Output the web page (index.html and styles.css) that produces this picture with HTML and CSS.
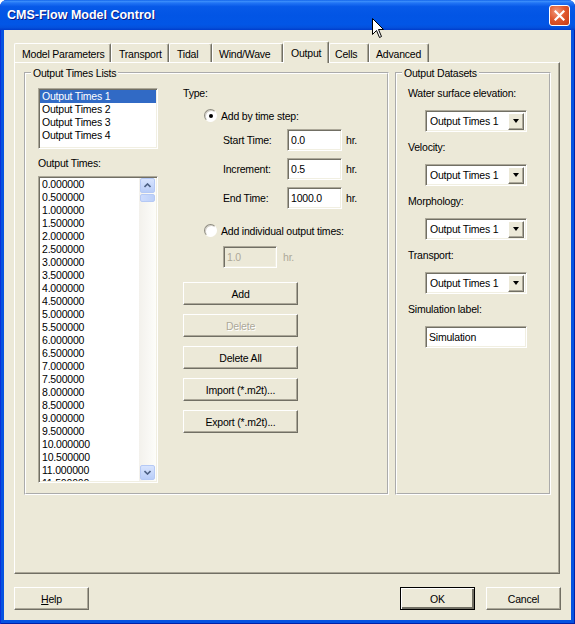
FILE: index.html
```html
<!DOCTYPE html>
<html lang="en">
<head>
    <meta charset="UTF-8">
    <title>CMS-Flow Model Control</title>
    <link rel="stylesheet" href="styles.css">
</head>
<body>
    <div class="window">
        <div class="titlebar">
            <span class="title">CMS-Flow Model Control</span>
            <span class="close-btn">
                <svg width="11" height="11" viewBox="0 0 11 11"><path d="M1.5 1.5 L9.5 9.5 M9.5 1.5 L1.5 9.5" stroke="#fff" stroke-width="2.2" stroke-linecap="square"/></svg>
            </span>
        </div>

        <div class="client">
            <div class="tabs">
                <div class="tab tab-params">Model Parameters</div>
                <div class="tab tab-transport">Transport</div>
                <div class="tab tab-tidal">Tidal</div>
                <div class="tab tab-wind">Wind/Wave</div>
                <div class="tab tab-output active">Output</div>
                <div class="tab tab-cells">Cells</div>
                <div class="tab tab-advanced">Advanced</div>
            </div>

            <div class="panel">
                <fieldset class="group times-group">
                    <legend>Output Times Lists</legend>
                    <div class="group-body">
                        <div class="lists-col">
                            <div class="listbox lists">
                                <div class="item selected">Output Times 1</div>
                                <div class="item">Output Times 2</div>
                                <div class="item">Output Times 3</div>
                                <div class="item">Output Times 4</div>
                            </div>
                            <div class="label times-label">Output Times:</div>
                            <div class="listbox times">
                                <div class="items">
                                    <div class="item">0.000000</div>
                                    <div class="item">0.500000</div>
                                    <div class="item">1.000000</div>
                                    <div class="item">1.500000</div>
                                    <div class="item">2.000000</div>
                                    <div class="item">2.500000</div>
                                    <div class="item">3.000000</div>
                                    <div class="item">3.500000</div>
                                    <div class="item">4.000000</div>
                                    <div class="item">4.500000</div>
                                    <div class="item">5.000000</div>
                                    <div class="item">5.500000</div>
                                    <div class="item">6.000000</div>
                                    <div class="item">6.500000</div>
                                    <div class="item">7.000000</div>
                                    <div class="item">7.500000</div>
                                    <div class="item">8.000000</div>
                                    <div class="item">8.500000</div>
                                    <div class="item">9.000000</div>
                                    <div class="item">9.500000</div>
                                    <div class="item">10.000000</div>
                                    <div class="item">10.500000</div>
                                    <div class="item">11.000000</div>
                                    <div class="item">11.500000</div>
                                </div>
                                <div class="vscroll">
                                    <div class="sb-btn">
                                        <svg width="7" height="5" viewBox="0 0 7 5"><path d="M0.5 4 L3.5 1 L6.5 4" fill="none" stroke="#4D6185" stroke-width="1.6"/></svg>
                                    </div>
                                    <div class="sb-thumb"></div>
                                    <div class="sb-space"></div>
                                    <div class="sb-btn">
                                        <svg width="7" height="5" viewBox="0 0 7 5"><path d="M0.5 1 L3.5 4 L6.5 1" fill="none" stroke="#4D6185" stroke-width="1.6"/></svg>
                                    </div>
                                </div>
                            </div>
                        </div>

                        <div class="type-col">
                            <div class="label">Type:</div>
                            <div class="radio-row">
                                <span class="radio checked"></span>
                                <span>Add by time step:</span>
                            </div>
                            <div class="field-row">
                                <span class="field-label">Start Time:</span>
                                <span class="textbox">0.0</span>
                                <span class="unit">hr.</span>
                            </div>
                            <div class="field-row">
                                <span class="field-label">Increment:</span>
                                <span class="textbox">0.5</span>
                                <span class="unit">hr.</span>
                            </div>
                            <div class="field-row">
                                <span class="field-label">End Time:</span>
                                <span class="textbox">1000.0</span>
                                <span class="unit">hr.</span>
                            </div>
                            <div class="radio-row second">
                                <span class="radio"></span>
                                <span>Add individual output times:</span>
                            </div>
                            <div class="field-row disabled">
                                <span class="textbox">1.0</span>
                                <span class="unit">hr.</span>
                            </div>
                            <div class="button-list">
                                <button class="btn wide">Add</button>
                                <button class="btn wide" disabled>Delete</button>
                                <button class="btn wide">Delete All</button>
                                <button class="btn wide">Import (*.m2t)...</button>
                                <button class="btn wide">Export (*.m2t)...</button>
                            </div>
                        </div>
                    </div>
                </fieldset>

                <fieldset class="group datasets-group">
                    <legend>Output Datasets</legend>
                    <div class="ds-body">
                        <div class="label">Water surface elevation:</div>
                        <div class="combo"><span>Output Times 1</span><span class="drop"></span></div>
                        <div class="label ds-label">Velocity:</div>
                        <div class="combo"><span>Output Times 1</span><span class="drop"></span></div>
                        <div class="label ds-label">Morphology:</div>
                        <div class="combo"><span>Output Times 1</span><span class="drop"></span></div>
                        <div class="label ds-label">Transport:</div>
                        <div class="combo"><span>Output Times 1</span><span class="drop"></span></div>
                        <div class="label ds-label">Simulation label:</div>
                        <div class="textbox sim">Simulation</div>
                    </div>
                </fieldset>
            </div>

            <div class="footer">
                <button class="btn"><u>H</u>elp</button>
                <button class="btn default">OK</button>
                <button class="btn">Cancel</button>
            </div>
        </div>

        <svg class="cursor" width="13" height="21" viewBox="0 0 13 21"><path d="M0.5 0.5 V16.5 L4.5 12.5 L7.5 19.5 L9.5 18.5 L6.5 11.5 H11.5 Z" fill="#fff" stroke="#000"/></svg>
    </div>
</body>
</html>
```

FILE: styles.css
```css
* {
    box-sizing: border-box;
}
body {
    margin: 0;
    background: #fff;
    font-family: "Liberation Sans", Arial, sans-serif;
    font-size: 10.5px;
    letter-spacing: -0.2px;
    color: #000;
}
.window {
    position: relative;
    width: 575px;
    height: 624px;
    display: flex;
    flex-direction: column;
    background: #0553E1;
    border-radius: 7px 7px 0 0;
    box-shadow: inset 1px 0 #0831D9, inset -1px -1px #0021A8;
}
.titlebar {
    height: 30px;
    display: flex;
    align-items: center;
    justify-content: space-between;
    padding: 0 5px 0 7px;
    border-radius: 7px 7px 0 0;
    background: linear-gradient(to bottom, #0A5CE8 0%, #3D8FFB 4%, #2174F5 10%, #0759E8 22%, #0255E5 50%, #0256E6 82%, #0450DC 92%, #003CCB 100%);
}
.title {
    color: #fff;
    font-weight: bold;
    font-size: 12.5px;
    letter-spacing: 0;
    text-shadow: 1px 1px #0A1883;
}
.close-btn {
    width: 21px;
    height: 21px;
    border: 1px solid #fff;
    border-radius: 3px;
    background: radial-gradient(circle at 35% 30%, #F29A7C 0%, #E0592F 45%, #C73A12 100%);
    display: flex;
    align-items: center;
    justify-content: center;
}
.client {
    flex: 1;
    margin: 0 4px 4px;
    padding: 11px 10px 0;
    background: #ECE9D8;
}

/* tabs */
.tabs {
    display: flex;
    align-items: flex-end;
    height: 21px;
}
.tab {
    height: 19px;
    padding: 4px 0 0 7px;
    border: 1px solid #fff;
    border-right-color: #716F64;
    border-bottom: 0;
    border-radius: 2px 2px 0 0;
    box-shadow: inset -1px 0 #ACA899;
    white-space: nowrap;
}
.tab-params { width: 97px; }
.tab-transport { width: 58px; }
.tab-tidal { width: 43px; }
.tab-wind { width: 71px; padding-left: 6px; }
.tab-output { width: 46px; }
.tab-cells { width: 40px; padding-left: 5px; }
.tab-advanced { width: 60px; padding-left: 6px; }
.tab.active {
    position: relative;
    height: 22px;
    margin-bottom: -1px;
    padding-top: 5px;
    background: #ECE9D8;
}
.panel {
    width: 546px;
    height: 512px;
    display: flex;
    gap: 6px;
    padding: 3px 0 0 9px;
    border: 1px solid;
    border-color: #fff #716F64 #716F64 #fff;
    box-shadow: inset -1px -1px #ACA899;
}

/* group boxes */
.group {
    margin: 0;
    padding: 0;
    height: 429px;
    border: 2px groove #fff;
}
.group legend {
    margin-left: 5px;
    padding: 0 2px;
    line-height: 14px;
}
.times-group {
    width: 365px;
}
.datasets-group {
    width: 156px;
}
.group-body {
    display: flex;
    gap: 25px;
    padding-left: 12px;
}
.label {
    line-height: 13px;
    white-space: nowrap;
}

/* list boxes */
.lists-col {
    width: 120px;
    padding-top: 8px;
}
.listbox {
    background: #fff;
    padding: 1px;
    border: 1px solid;
    border-color: #ACA899 #fff #fff #ACA899;
    box-shadow: inset 1px 1px #716F64, inset -1px -1px #F1EFE2;
    overflow: hidden;
}
.listbox.lists {
    height: 61px;
}
.item {
    height: 13px;
    line-height: 13px;
    padding-left: 2px;
    white-space: nowrap;
}
.item.selected {
    background: #316AC5;
    color: #fff;
}
.times-label {
    margin-top: 8px;
}
.listbox.times {
    margin-top: 6px;
    height: 307px;
    display: flex;
}
.items {
    flex: 1;
    overflow: hidden;
}
.vscroll {
    width: 17px;
    display: flex;
    flex-direction: column;
    padding: 0 1px 1px;
    background: linear-gradient(to right, #F3F1EC, #FDFDFA);
}
.sb-btn {
    height: 15px;
    display: flex;
    align-items: center;
    justify-content: center;
    border: 1px solid #B5C9F5;
    border-radius: 2px;
    background: linear-gradient(#D8E4FE, #B9CDF8);
}
.sb-thumb {
    height: 8px;
    margin-top: 1px;
    border: 1px solid #B5C9F5;
    border-radius: 2px;
    background: linear-gradient(to right, #CEDCFD, #BCD0F9);
}
.sb-space {
    flex: 1;
}

/* type column */
.type-col {
    padding-top: 7px;
}
.radio-row {
    display: flex;
    align-items: center;
    gap: 4px;
    height: 13px;
    margin-top: 9px;
    padding-left: 21px;
    white-space: nowrap;
}
.radio-row.second {
    margin-top: 15px;
}
.radio {
    width: 13px;
    height: 13px;
    border-radius: 50%;
    border: 1px solid;
    border-color: #8E8C80 #fff #fff #8E8C80;
    background: #fff;
    display: flex;
    align-items: center;
    justify-content: center;
    box-shadow: inset 1px 1px #D4D0C8;
}
.radio.checked::after {
    content: "";
    width: 4px;
    height: 4px;
    border-radius: 50%;
    background: #000;
}
.field-row {
    display: flex;
    align-items: center;
    height: 22px;
    margin-top: 7px;
    padding-left: 40px;
}
.field-label {
    width: 64px;
}
.textbox {
    width: 55px;
    height: 22px;
    line-height: 18px;
    padding: 1px 3px;
    background: #fff;
    border: 1px solid;
    border-color: #ACA899 #fff #fff #ACA899;
    box-shadow: inset 1px 1px #716F64, inset -1px -1px #F1EFE2;
    white-space: nowrap;
}
.unit {
    margin-left: 4px;
}
.field-row.disabled {
    margin-top: 9px;
    color: #ACA899;
}
.field-row.disabled .textbox {
    width: 54px;
    background: #ECE9D8;
}
.field-row.disabled .unit {
    margin-left: 6px;
}

/* buttons */
.button-list {
    display: flex;
    flex-direction: column;
    gap: 9px;
    margin-top: 14px;
}
.btn {
    width: 75px;
    height: 23px;
    padding: 0;
    font: inherit;
    letter-spacing: inherit;
    color: #000;
    background: #ECE9D8;
    border: 1px solid;
    border-color: #fff #716F64 #716F64 #fff;
    box-shadow: inset -1px -1px #ACA899;
}
.btn.wide {
    width: 115px;
}
.btn:disabled {
    color: #ACA899;
    text-shadow: 1px 1px #fff;
}
.btn.default {
    margin-left: auto;
    border-color: #000;
    box-shadow: inset 1px 1px #fff, inset -2px -2px #716F64;
}

/* datasets */
.ds-body {
    padding: 7px 0 0 11px;
}
.ds-label {
    margin-top: 9px;
}
.combo {
    width: 102px;
    height: 22px;
    margin: 10px 0 0 17px;
    display: flex;
    align-items: center;
    justify-content: space-between;
    padding: 0 2px 0 4px;
    background: #fff;
    border: 1px solid;
    border-color: #ACA899 #fff #fff #ACA899;
    box-shadow: inset 1px 1px #716F64, inset -1px -1px #F1EFE2;
    white-space: nowrap;
}
.drop {
    width: 16px;
    height: 17px;
    display: flex;
    align-items: center;
    justify-content: center;
    background: #ECE9D8;
    border: 1px solid;
    border-color: #fff #716F64 #716F64 #fff;
    box-shadow: inset -1px -1px #ACA899;
}
.drop::after {
    content: "";
    border-left: 3.5px solid transparent;
    border-right: 3.5px solid transparent;
    border-top: 4px solid #000;
}
.textbox.sim {
    width: 102px;
    margin: 10px 0 0 17px;
}

/* dialog buttons */
.footer {
    display: flex;
    gap: 11px;
    margin-top: 13px;
}
.cursor {
    position: absolute;
    left: 372px;
    top: 18px;
}
```
